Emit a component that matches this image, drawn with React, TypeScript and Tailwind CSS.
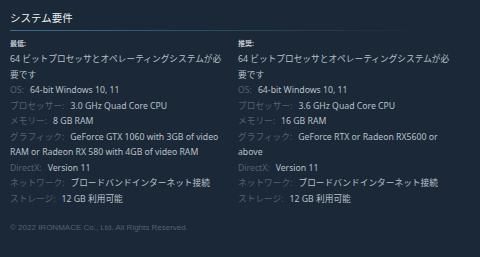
const minimum = [
  { label: "OS:", value: "64-bit Windows 10, 11" },
  { label: "プロセッサー:", value: "3.0 GHz Quad Core CPU" },
  { label: "メモリー:", value: "8 GB RAM" },
  { label: "グラフィック:", value: "GeForce GTX 1060 with 3GB of video RAM or Radeon RX 580 with 4GB of video RAM" },
  { label: "DirectX:", value: "Version 11" },
  { label: "ネットワーク:", value: "ブロードバンドインターネット接続" },
  { label: "ストレージ:", value: "12 GB 利用可能" },
]

const recommended = [
  { label: "OS:", value: "64-bit Windows 10, 11" },
  { label: "プロセッサー:", value: "3.6 GHz Quad Core CPU" },
  { label: "メモリー:", value: "16 GB RAM" },
  { label: "グラフィック:", value: "GeForce RTX or Radeon RX5600 or above" },
  { label: "DirectX:", value: "Version 11" },
  { label: "ネットワーク:", value: "ブロードバンドインターネット接続" },
  { label: "ストレージ:", value: "12 GB 利用可能" },
]

function ReqColumn({ title, rows }: { title: string; rows: { label: string; value: string }[] }) {
  return (
    <div>
      <div className="text-[7px] leading-[10px] font-bold text-[#c3c9cf]">{title}</div>
      <ul className="mt-[3px] text-[8.7px] leading-[15.5px] text-[#b9c0c7]">
        <li>64 ビットプロセッサとオペレーティングシステムが必要です</li>
        {rows.map((r) => (
          <li key={r.label}>
            <span className="mr-[6px] text-[#55636e]">{r.label}</span>
            {r.value}
          </li>
        ))}
      </ul>
    </div>
  )
}

export default function App() {
  return (
    <div
      className="w-[480px] h-[257px] bg-[#1b2838] px-[10px] pt-[10px] overflow-hidden"
      style={{ fontFamily: '"Noto Sans", "Noto Sans CJK JP", sans-serif' }}
    >
      <h2 className="text-[10.5px] leading-[16px] text-[#eef1f4]">システム要件</h2>
      <div className="mt-[4px] h-px w-[420px] bg-gradient-to-r from-[#3b6e8c] to-transparent" />

      <div className="mt-[8px] grid grid-cols-[218px_218px] gap-x-[10px]">
        <ReqColumn title="最低:" rows={minimum} />
        <ReqColumn title="推奨:" rows={recommended} />
      </div>

      <div className="mt-[15px] text-[8px] text-[#55616c]" style={{ fontFamily: '"Liberation Sans", Arial, sans-serif' }}>
        © 2022 IRONMACE Co., Ltd. All Rights Reserved.
      </div>
    </div>
  )
}
